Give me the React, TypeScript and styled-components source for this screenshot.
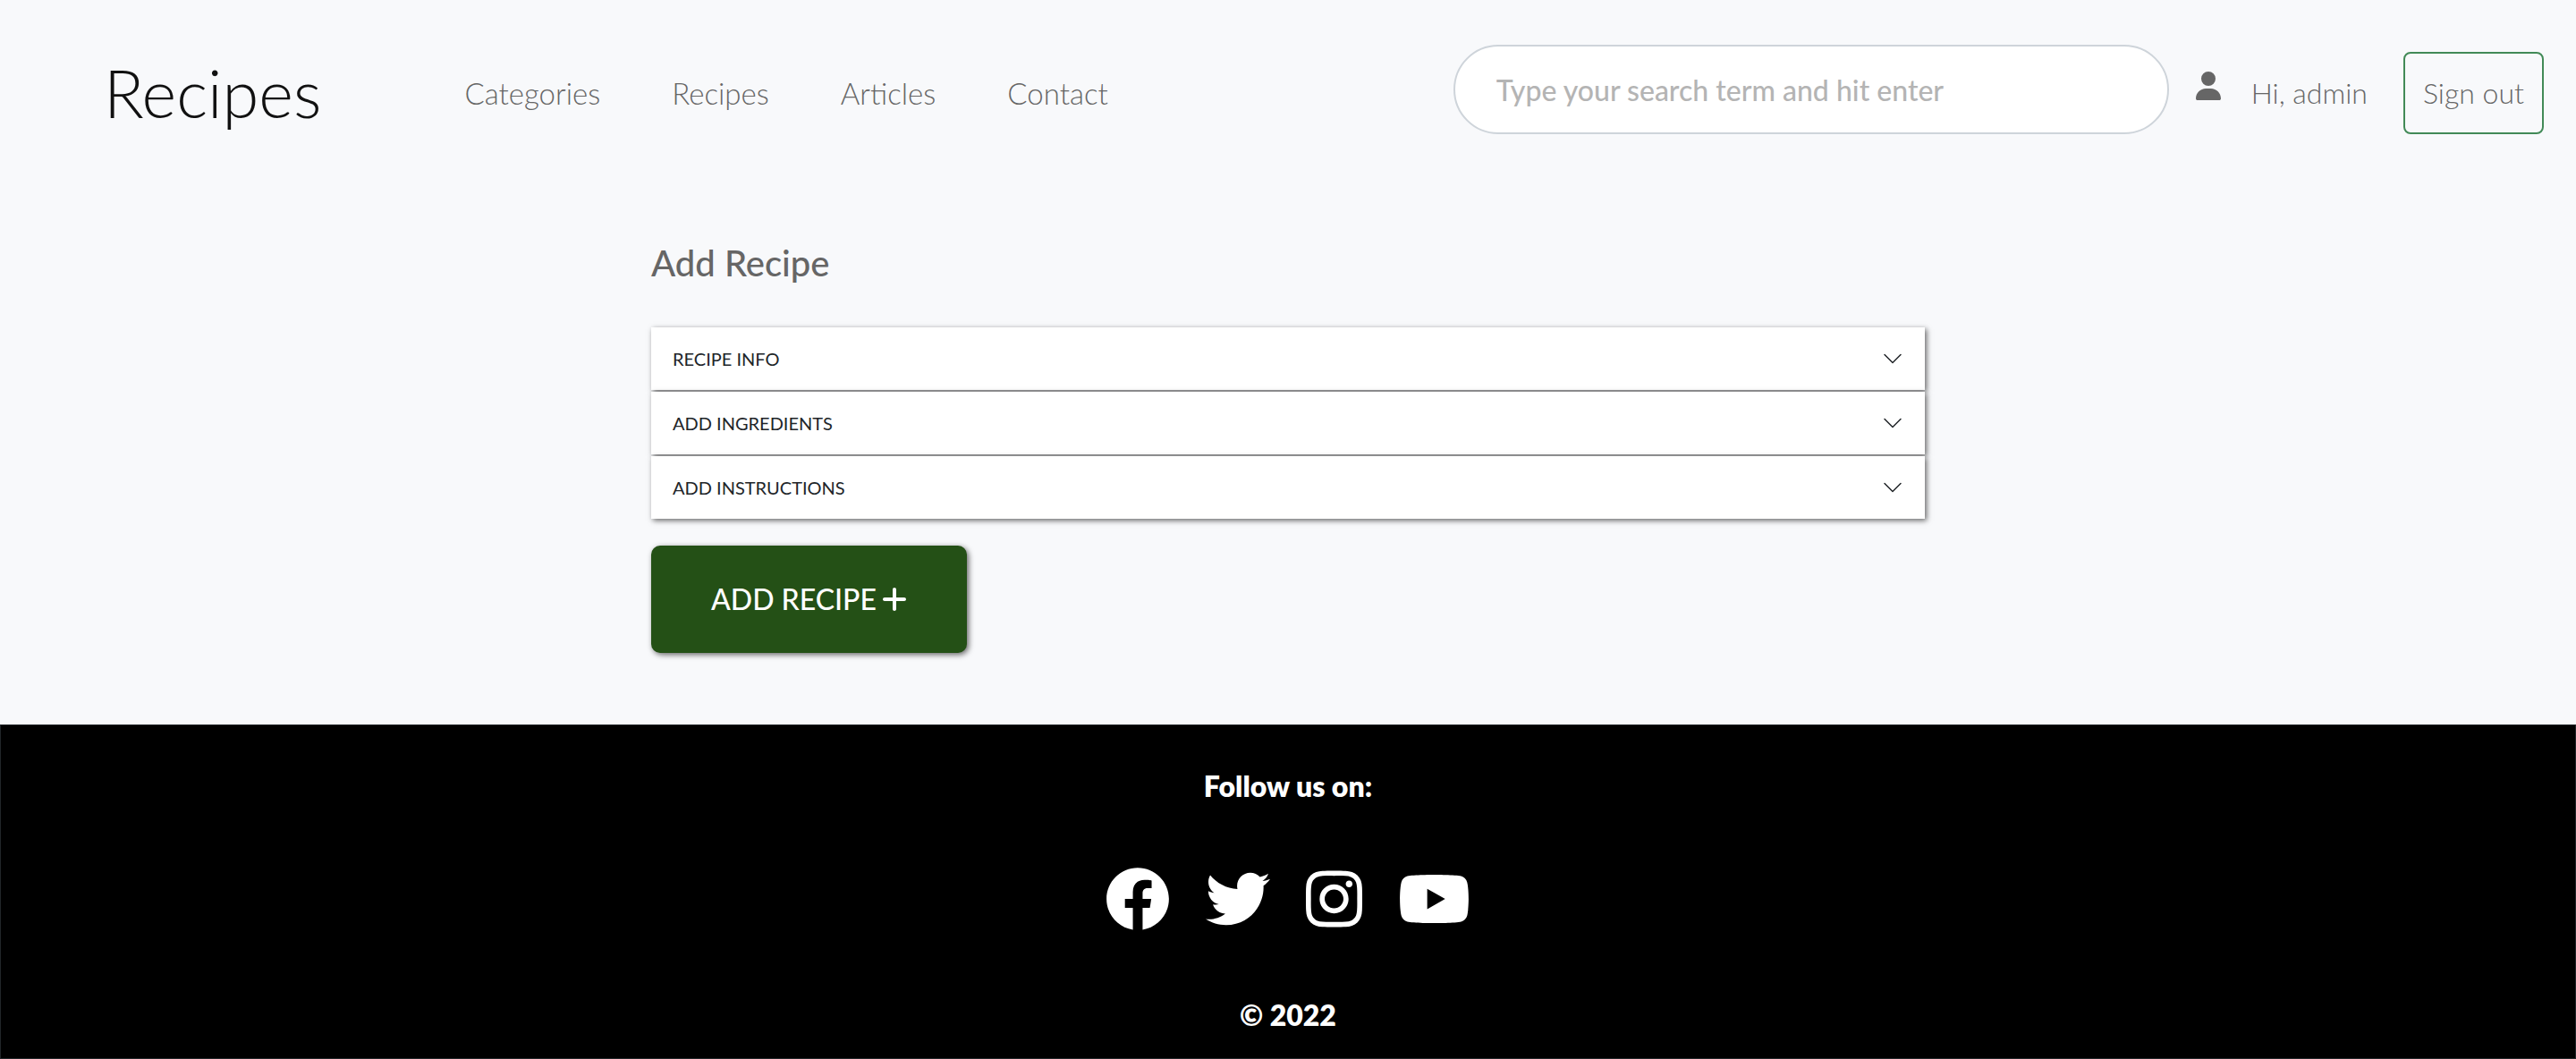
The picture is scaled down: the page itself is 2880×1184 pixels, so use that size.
import React from "react";
import styled, { createGlobalStyle } from "styled-components";
import { FaUser, FaPlus } from "react-icons/fa6";
import { FaFacebook, FaTwitter, FaInstagram, FaYoutube } from "react-icons/fa";
import { BsChevronDown } from "react-icons/bs";

const GlobalStyle = createGlobalStyle`
  *, *::before, *::after { box-sizing: border-box; }
  body {
    margin: 0;
    background: #f8f9fb;
    color: #212529;
    font-family: Lato, "Liberation Sans", sans-serif;
    font-size: 32px;
    line-height: 40px;
  }
  h1, h2, p, ul { margin: 0; padding: 0; }
  button, input { font: inherit; }
`;

const Page = styled.div`
  display: flex;
  flex-direction: column;
  min-height: 100vh;
`;

const Header = styled.header`
  display: flex;
  align-items: center;
  padding: 50px 36px 50px 116px;
`;

const Brand = styled.a`
  color: #111;
  font-size: 74px;
  line-height: 92px;
  padding-top: 8px;
  font-weight: 300;
  text-decoration: none;
`;

const Nav = styled.nav`
  display: flex;
  gap: 80px;
  margin: 8px auto 0 160px;
`;

const NavLink = styled.a`
  color: #666;
  font-size: 33px;
  font-weight: 300;
  text-decoration: none;
`;

const SearchInput = styled.input`
  flex: 0 1 800px;
  min-width: 0;
  height: 100px;
  padding: 0 46px;
  border: 2px solid #ced4da;
  border-radius: 50px;
  background: #fff;
  color: #212529;
  &::placeholder { color: #b4b4b4; opacity: 1; font-weight: 500; }
`;

const Account = styled.div`
  display: flex;
  align-items: flex-end;
  margin-left: 30px;
  color: #666;
  font-weight: 300;
`;

const UserIcon = styled(FaUser)`
  width: 28px;
  height: 32px;
  margin-bottom: 38px;
`;

const Greeting = styled.span`
  margin: 0 40px 26px 34px;
  white-space: nowrap;
`;

const SignOut = styled.button`
  height: 92px;
  margin-top: 8px;
  padding: 0 20px;
  border: 2px solid #428a57;
  border-radius: 8px;
  background: transparent;
  color: #666;
  white-space: nowrap;
`;

const Main = styled.main`
  flex: 1;
  width: 100%;
  max-width: 1424px;
  margin: 0 auto;
  padding: 68px 0 80px;
`;

const Title = styled.h1`
  color: #666;
  font-size: 40px;
  line-height: 52px;
  font-weight: 500;
  margin-bottom: 46px;
`;

const Accordion = styled.div`
  display: flex;
  flex-direction: column;
  gap: 2px;
`;

const AccordionRow = styled.button`
  display: flex;
  align-items: center;
  justify-content: space-between;
  height: 70px;
  padding: 0 24px;
  border: 0;
  background: #fff;
  box-shadow: 2px 2px 6px rgba(0, 0, 0, 0.6);
  color: #212529;
  font-size: 20px;
  line-height: 28px;
  text-transform: uppercase;
`;

const AddButton = styled.button`
  display: flex;
  align-items: center;
  justify-content: center;
  gap: 6px;
  height: 120px;
  margin-top: 30px;
  padding: 0 67px;
  border: 0;
  border-radius: 10px;
  background: #245016;
  box-shadow: 2px 2px 6px rgba(0, 0, 0, 0.6);
  color: #fff;
  font-weight: 500;
  text-transform: uppercase;
  svg { width: 28px; height: 32px; }
`;

const Footer = styled.footer`
  display: flex;
  flex-direction: column;
  align-items: center;
  padding: 48px 0 28px;
  border: 1px solid #212529;
  background: #000;
  color: #fff;
  font-weight: 800;
`;

const Socials = styled.ul`
  display: flex;
  gap: 40px;
  margin: 70px 0 74px;
  list-style: none;
`;

const SocialLink = styled.a<{ $width: number }>`
  display: block;
  color: #fff;
  svg { display: block; width: ${(p) => p.$width}px; height: 72px; }
`;

const links = ["Categories", "Recipes", "Articles", "Contact"];
const sections = ["Recipe info", "Add ingredients", "Add instructions"];
const socials = [
  { name: "Facebook", Icon: FaFacebook, width: 72 },
  { name: "Twitter", Icon: FaTwitter, width: 72 },
  { name: "Instagram", Icon: FaInstagram, width: 63 },
  { name: "YouTube", Icon: FaYoutube, width: 81 },
];

export default function App() {
  return (
    <Page>
      <GlobalStyle />
      <Header>
        <Brand href="#">Recipes</Brand>
        <Nav>
          {links.map((label) => (
            <NavLink key={label} href="#">{label}</NavLink>
          ))}
        </Nav>
        <SearchInput type="search" aria-label="Search" placeholder="Type your search term and hit enter" />
        <Account>
          <UserIcon aria-hidden />
          <Greeting>Hi, admin</Greeting>
          <SignOut type="button">Sign out</SignOut>
        </Account>
      </Header>
      <Main>
        <Title>Add Recipe</Title>
        <Accordion>
          {sections.map((label) => (
            <AccordionRow key={label} type="button" aria-expanded={false}>
              {label}
              <BsChevronDown size={24} aria-hidden />
            </AccordionRow>
          ))}
        </Accordion>
        <AddButton type="button">
          Add recipe
          <FaPlus aria-hidden />
        </AddButton>
      </Main>
      <Footer>
        <p>Follow us on:</p>
        <Socials>
          {socials.map(({ name, Icon, width }) => (
            <li key={name}>
              <SocialLink href="#" aria-label={name} $width={width}><Icon /></SocialLink>
            </li>
          ))}
        </Socials>
        <p>© 2022</p>
      </Footer>
    </Page>
  );
}
